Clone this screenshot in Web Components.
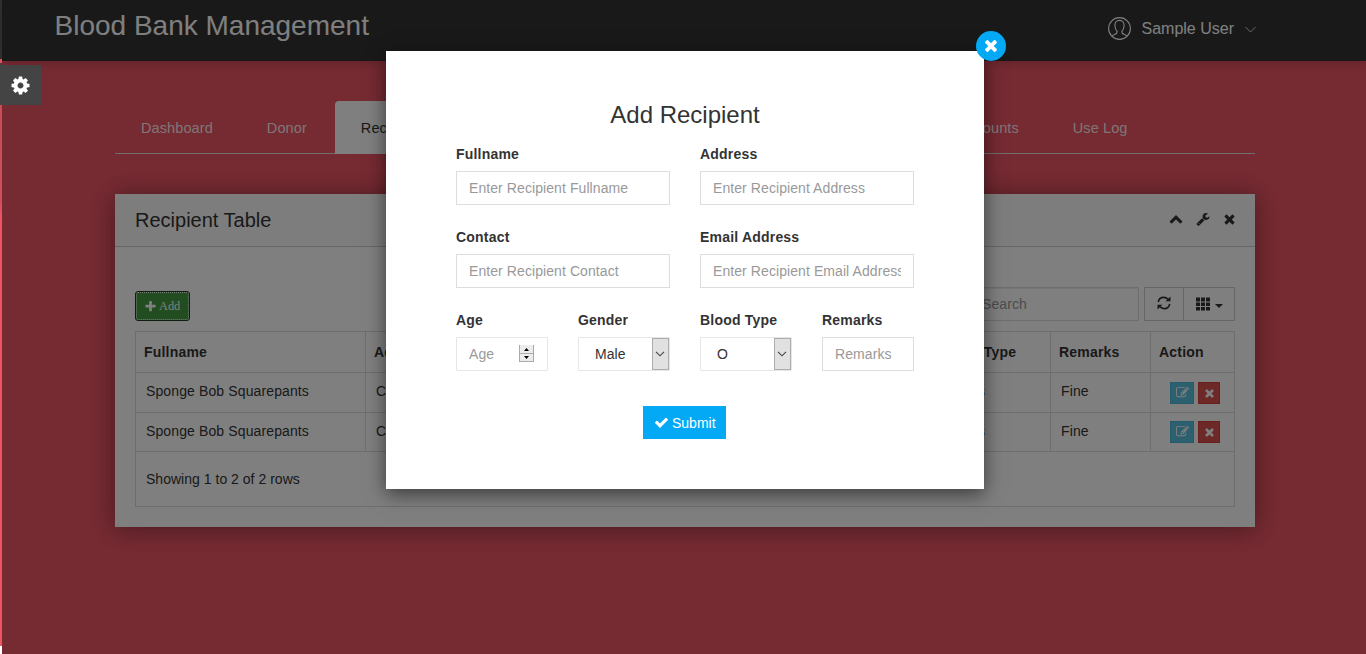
<!DOCTYPE html>
<html lang="en">
<head>
<meta charset="utf-8">
<title>Blood Bank Management</title>
<style>
html,body{margin:0;height:100%;overflow:hidden}
body{font:14px/20px "Liberation Sans",Arial,sans-serif;color:#333;background:#ed5565}
</style>
</head>
<body>
<bb-app></bb-app>
<script>
const define = (name, html, init) => {
  const t = document.createElement('template');
  t.innerHTML = '<style>*{box-sizing:border-box}</style>' + html;
  customElements.define(name, class extends HTMLElement {
    constructor() {
      super();
      this.attachShadow({mode: 'open'}).append(t.content.cloneNode(true));
    }
    connectedCallback() { if (init) init(this, this.shadowRoot); }
  });
};

const glyphs = {
  times: 'M1490 1258q0 40-28 68l-136 136q-28 28-68 28t-68-28l-294-294-294 294q-28 28-68 28t-68-28l-136-136q-28-28-28-68t28-68l294-294-294-294q-28-28-28-68t28-68l136-136q28-28 68-28t68 28l294 294 294-294q28-28 68-28t68 28l136 136q28 28 28 68t-28 68l-294 294 294 294q28 28 28 68z',
  plus: 'M1600 736v192q0 40-28 68t-68 28h-416v416q0 40-28 68t-68 28h-192q-40 0-68-28t-28-68v-416h-416q-40 0-68-28t-28-68v-192q0-40 28-68t68-28h416v-416q0-40 28-68t68-28h192q40 0 68 28t28 68v416h416q40 0 68 28t28 68z',
  check: 'M1671 566q0 40-28 68l-724 724-136 136q-28 28-68 28t-68-28l-136-136-362-362q-28-28-28-68t28-68l136-136q28-28 68-28t68 28l294 295 656-657q28-28 68-28t68 28l136 136q28 28 28 68z',
  up: 'M1683 1271l-166 165q-28 28-65 28t-65-28l-491-491-491 491q-28 28-65 28t-65-28l-166-165q-19-19-19-45.500t19-45.500l722-721q28-28 65-28t65 28l722 721q19 19 19 45.500t-19 45.500z',
  wrench: 'M448 1472q0-26-19-45t-45-19-45 19-19 45 19 45 45 19 45-19 19-45zm644-420l-682 682q-37 37-90 37-52 0-91-37l-106-108q-38-36-38-90 0-53 38-91l681-681q39 98 114.5 173.5t173.5 114.5zm634-435q0 39-23 106-47 134-164.5 217.5t-258.5 83.5q-185 0-316.5-131.5t-131.5-316.5 131.5-316.5 316.5-131.5q58 0 121.5 16.5t107.5 46.5q16 11 16 28t-16 28l-293 169v224l193 107q5-3 79-48.5t135.5-81 70.5-35.5q15 0 23.5 10t8.5 25z',
  edit: 'M888 1184l116-116-152-152-116 116v56h96v96h56zm440-720q-16-16-33 1l-350 350q-17 17-1 33t33-1l350-350q17-17 1-33zm80 594v190q0 119-84.5 203.5t-203.5 84.5h-832q-119 0-203.5-84.5t-84.5-203.5v-832q0-119 84.5-203.5t203.5-84.5h832q63 0 117 25 15 7 18 23 3 17-9 29l-49 49q-14 14-32 8-23-6-45-6h-832q-66 0-113 47t-47 113v832q0 66 47 113t113 47h832q66 0 113-47t47-113v-126q0-13 9-22l64-64q15-15 35-7t20 29zm-96-738l288 288-672 672h-288v-288zm444 132l-92 92-288-288 92-92q28-28 68-28t68 28l152 152q28 28 28 68t-28 68z',
  cog: 'M1152 896q0-106-75-181t-181-75-181 75-75 181 75 181 181 75 181-75 75-181zm512-109v222q0 12-8 23t-20 13l-185 28q-19 54-39 91 35 50 107 138 10 12 10 25t-9 23q-27 37-99 108t-94 71q-12 0-26-9l-138-108q-44 23-91 38-16 136-29 186-7 28-36 28h-222q-14 0-24.5-8.5t-11.5-21.5l-28-184q-49-16-90-37l-141 107q-10 9-25 9-14 0-25-11-126-114-165-168-7-10-7-23 0-12 8-23 15-21 51-66.5t54-70.5q-27-50-41-99l-183-27q-13-2-21-12.5t-8-23.5v-222q0-12 8-23t19-13l186-28q14-46 39-92-40-57-107-138-10-12-10-24 0-10 9-23 26-36 98.5-107.5t94.5-71.5q13 0 26 10l138 107q44-23 91-38 16-136 29-186 7-28 36-28h222q14 0 24.5 8.5t11.5 21.5l28 184q49 16 90 37l142-107q9-9 24-9 13 0 25 10 129 119 165 170 7 8 7 22 0 12-8 23-15 21-51 66.5t-54 70.5q26 50 41 98l183 28q13 2 21 12.5t8 23.5z'
};

define('bb-icon', `<style>:host{display:block;flex:none}svg{display:block;width:100%;height:100%}</style>
<svg viewBox="0 0 1792 1792" fill="currentColor"><path/></svg>`,
  (el, r) => {
    const s = el.getAttribute('size') + 'px';
    el.style.width = el.style.height = s;
    r.querySelector('path').setAttribute('d', glyphs[el.getAttribute('name')]);
  });

define('bb-header', `<style>
:host{display:flex;height:61px;background:#333;justify-content:space-between;padding:0 110.5px 0 52.5px;color:#fff;box-shadow:0 0 12px rgba(0,0,0,.25);position:relative}
h1{margin:10px 0 0;font-size:28px;line-height:32px;font-weight:400;white-space:nowrap}
.user{display:flex;align-items:center;height:57px;font-size:16px}
.user span{margin:0 10.5px 0 10.5px}
</style>
<h1>Blood Bank Management</h1>
<div class="user">
<svg width="23" height="23" viewBox="0 0 23 23" fill="none" stroke="#fff" stroke-width="1.1"><circle cx="11.5" cy="11.5" r="10.9"/><path d="M3.800 19.200c.5-1.100 1.700-1.400 3.200-1.900 1.700-.6 2.300-1.200 2.200-2.800C7.700 13 7 10.800 6.900 8.500 6.800 5.300 8.600 3.400 11.500 3.400s4.700 1.900 4.600 5.100c-.1 2.300-.8 4.500-2.300 6-.1 1.600.5 2.200 2.200 2.800 1.500.5 2.700.8 3.200 1.900"/></svg>
<span>Sample User</span>
<svg width="11" height="7" viewBox="0 0 11 7" fill="none" stroke="#fff" stroke-width=".8" style="margin-top:2px"><path d="M.5 1l5 5 5-5"/></svg>
</div>`);

define('bb-tab', `<style>
:host{display:block;height:52px;padding:17px 26px 0;border-radius:4px 4px 0 0;color:rgba(255,255,255,.9);font-size:14.5px;letter-spacing:.1px;white-space:nowrap;margin-right:2px}
:host([active]){background:#fff;color:#333;height:53px;margin-bottom:-1px;width:130px}
</style><slot></slot>`);

define('bb-tabs', `<style>
:host{display:flex;height:53px;margin:40px 0 0;border-bottom:1px solid #ddd}
.gap{flex:1}.end{width:99.5px}
</style>
<bb-tab>Dashboard</bb-tab><bb-tab>Donor</bb-tab><bb-tab active>Recipient</bb-tab>
<div class="gap"></div><bb-tab>Accounts</bb-tab><bb-tab>Use Log</bb-tab><div class="end"></div>`);

define('bb-action', `<style>
:host{display:flex;align-items:center;justify-content:center;width:24px;height:22px;background:#5bc0de;border:1px solid #46b8da;color:#fff;padding-bottom:1px}
:host([kind=remove]){width:22px;background:#d9534f;border-color:#d43f3a;padding:0}
</style><slot></slot>`);

define('bb-row', `<style>
:host{display:grid;grid-template-columns:230px 565px 120px 100px 1fr;height:40px;border-bottom:1px solid #ddd;letter-spacing:.12px}
.c{padding:8px 10px 0;border-right:1px solid #ddd;white-space:nowrap;overflow:hidden}
.c:last-child{border:0}
.c.link{color:#03a9f4;padding-left:47px}
.c.acts{display:flex;gap:4px;padding:9px 0 0 19px}
:host(:last-of-type) .c.acts{padding-top:8px}
</style>
<div class="c">Sponge Bob Squarepants</div><div class="c">Conch Street</div><div class="c link">s</div><div class="c">Fine</div>
<div class="c acts"><bb-action><bb-icon name="edit" size="13"></bb-icon></bb-action><bb-action kind="remove"><bb-icon name="times" size="13"></bb-icon></bb-action></div>`);

define('bb-table', `<style>
:host{display:block;border:1px solid #ddd;height:176px}
.head{display:grid;grid-template-columns:230px 565px 120px 100px 1fr;height:41px;border-bottom:1px solid #ddd;font-weight:700;letter-spacing:.2px}
.head div{padding:10px 8px 0;border-right:1px solid #ddd}
.head div:last-child{border:0}
bb-row:last-of-type{height:39px}
.foot{padding:17px 10px 0;letter-spacing:.02px}
</style>
<div class="head"><div>Fullname</div><div>Address</div><div>Blood Type</div><div>Remarks</div><div>Action</div></div>
<bb-row></bb-row><bb-row></bb-row>
<div class="foot">Showing 1 to 2 of 2 rows</div>`);

define('bb-toolbar', `<style>
:host{display:flex;height:34px;margin-bottom:10px;align-items:flex-start}
.add{display:flex;align-items:center;gap:2px;margin-top:4px;width:55px;height:30px;border:1px solid #1c3a20;border-radius:3px;background:#429b42;color:#fff;font:12.3px/18px "Liberation Serif",serif;padding:0 0 0 8px;outline:1px dotted #fff;outline-offset:-2px}
.search{margin-left:auto;width:170px;height:34px;border:1px solid #ddd;padding:6px 12px;color:#999;letter-spacing:.1px;box-shadow:inset 0 1px 1px rgba(0,0,0,.075)}
.btns{display:flex;margin-left:5px;width:91px;height:34px;border:1px solid #ccc;color:#333}
.btns div{display:flex;align-items:center;justify-content:center;width:39px;border-right:1px solid #ccc}
.btns div:first-child{padding-bottom:2px}
.btns div:last-child{width:50px;border:0;gap:5px;padding:0 0 1px 0}
</style>
<div class="add"><bb-icon name="plus" size="13"></bb-icon><span>Add</span></div>
<div class="search">Search</div>
<div class="btns"><div><svg width="14" height="14" viewBox="0 0 14 14" fill="none" stroke="currentColor" stroke-width="1.6"><path d="M1.300 6.200C1.700 3.300 4 1.400 6.800 1.400c1.900 0 3.300.8 4.300 2.100M12.700 7.800c-.4 2.900-2.700 4.800-5.500 4.800-1.900 0-3.300-.8-4.300-2.100"/><path d="M13.500.4v4.900H8.600zM.5 13.600V8.700h4.900z" fill="currentColor" stroke="none"/></svg></div>
<div><svg width="14" height="14" viewBox="0 0 14 14" fill="currentColor"><path d="M0 .5h4v4H0zM5 .5h4v4H5zM10 .5h4v4h-4zM0 5.500h4v3.500H0zM5 5.500h4v3.500H5zM10 5.500h4v3.500h-4zM0 10h4v3.500H0zM5 10h4v3.500H5zM10 10h4v3.500h-4z"/></svg><svg width="8" height="4" viewBox="0 0 8 4" fill="currentColor" style="margin-top:4px"><path d="M0 0h8L4 4z"/></svg></div></div>`);

define('bb-panel', `<style>
:host{display:block;margin-top:40px;height:333px;background:#fff;box-shadow:0 2px 24px rgba(0,0,0,.4)}
header{display:flex;align-items:center;height:53px;background:#fbfbfb;border-bottom:1px solid #ccc;padding:0 18px 0 20px;gap:13px}
header bb-icon{margin-bottom:2px}
header bb-icon:last-child{margin-left:-1px}
h2{font-size:20px;line-height:24px;font-weight:400;margin:0 auto 0 0}
.body{padding:40px 20px 0}
</style>
<header><h2>Recipient Table</h2><bb-icon name="up" size="14"></bb-icon><bb-icon name="wrench" size="14"></bb-icon><bb-icon name="times" size="15"></bb-icon></header>
<div class="body"><bb-toolbar></bb-toolbar><bb-table></bb-table></div>`);

define('bb-field', `<style>
:host{display:block;min-width:0}
label{display:block;height:20px;margin-bottom:7px;font-weight:700;letter-spacing:.2px;white-space:nowrap}
.box{display:flex;height:34px;border:1px solid #ddd;padding:6px 12px;color:#999;letter-spacing:.08px;white-space:nowrap}
.text{flex:1;min-width:0;overflow:hidden}
:host([kind]) .box{border-color:#e5e6e7;border-radius:1px}
:host([kind=select]) .box{color:#333;padding:0 0 0 16px;line-height:32px}
.drop,.spin{display:none}
:host([kind=select]) .drop{display:flex;width:17px;align-items:center;justify-content:center;background:#e1e1e1;border:1px solid #adadad}
:host([kind=number]) .spin{display:block;width:15px;height:18px;margin:1px 1px 0 0}
.drop svg{margin-right:1px;flex:none}
</style>
<label></label><div class="box"><div class="text"><slot></slot></div>
<div class="drop"><svg width="10" height="6" viewBox="0 0 10 6" fill="none" stroke="#444" stroke-width="1.1"><path d="M1 .8l4 4 4-4"/></svg></div>
<svg class="spin" viewBox="0 0 15 18"><path d="M0 0h15v17H0z" fill="#aaa"/><path d="M1 0h13v8H1zM1 9h13v7H1z" fill="#ececec"/><path d="M5 6h5L7.500 3zM5 11h5l-2.500 3z"/></svg></div>`,
  (el, r) => { r.querySelector('label').textContent = el.getAttribute('label'); });

define('bb-dialog', `<style>
:host{display:block;position:relative;width:598px;height:438px;background:#fff;padding:51px 70px 0;box-shadow:0 5px 18px rgba(0,0,0,.55)}
h2{margin:0 0 16px;font-size:24px;line-height:26px;font-weight:400;text-align:center}
.grid{display:grid;grid-template-columns:repeat(4,92px);column-gap:30px;row-gap:22px}
.wide{grid-column:span 2}
.close{position:absolute;top:-20px;right:-22px;width:30px;height:30px;border-radius:50%;background:#03a9f4;color:#fff;display:flex;align-items:center;justify-content:center}
.submit{display:flex;align-items:center;gap:3px;width:83px;height:33px;margin:35px 0 0 187px;padding-left:11px;background:#03a9f4;color:#fff}
</style>
<div class="close"><bb-icon name="times" size="18"></bb-icon></div>
<h2>Add Recipient</h2>
<div class="grid">
<bb-field class="wide" label="Fullname">Enter Recipient Fullname</bb-field>
<bb-field class="wide" label="Address">Enter Recipient Address</bb-field>
<bb-field class="wide" label="Contact">Enter Recipient Contact</bb-field>
<bb-field class="wide" label="Email Address">Enter Recipient Email Address</bb-field>
<bb-field kind="number" label="Age">Age</bb-field>
<bb-field kind="select" label="Gender">Male</bb-field>
<bb-field kind="select" label="Blood Type">O</bb-field>
<bb-field label="Remarks">Remarks</bb-field>
</div>
<div class="submit"><bb-icon name="check" size="15"></bb-icon><span>Submit</span></div>`);

define('bb-edge', `<style>
:host{display:block;width:2px;height:654px;background:linear-gradient(#333 0 59px,#ed5565 59px 63px,#444 63px 103px,#c94c59 103px,#cf4e5b 200px,#ed5565 218px 646px,#fff 646px)}
</style>`);

define('bb-settings', `<style>
:host{display:flex;position:absolute;left:0;top:65px;width:41px;height:40px;background:#444;color:#fff;align-items:center;justify-content:center}
</style><bb-icon name="cog" size="21"></bb-icon>`);

define('bb-app', `<style>
:host{display:grid;grid-template-columns:2px 1fr;height:654px;position:relative;overflow:hidden}
.page{min-width:0;background:#ed5565}
main{width:1140px;margin-left:113px}
.shade{position:absolute;inset:0 0 0 2px;background:rgba(0,0,0,.5);display:flex;align-items:flex-start;padding:51px 0 0 384px}
</style>
<bb-edge></bb-edge>
<div class="page"><bb-header></bb-header><main><bb-tabs></bb-tabs><bb-panel></bb-panel></main></div>
<div class="shade"><bb-dialog></bb-dialog></div>
<bb-settings></bb-settings>`);
</script>
</body>
</html>
